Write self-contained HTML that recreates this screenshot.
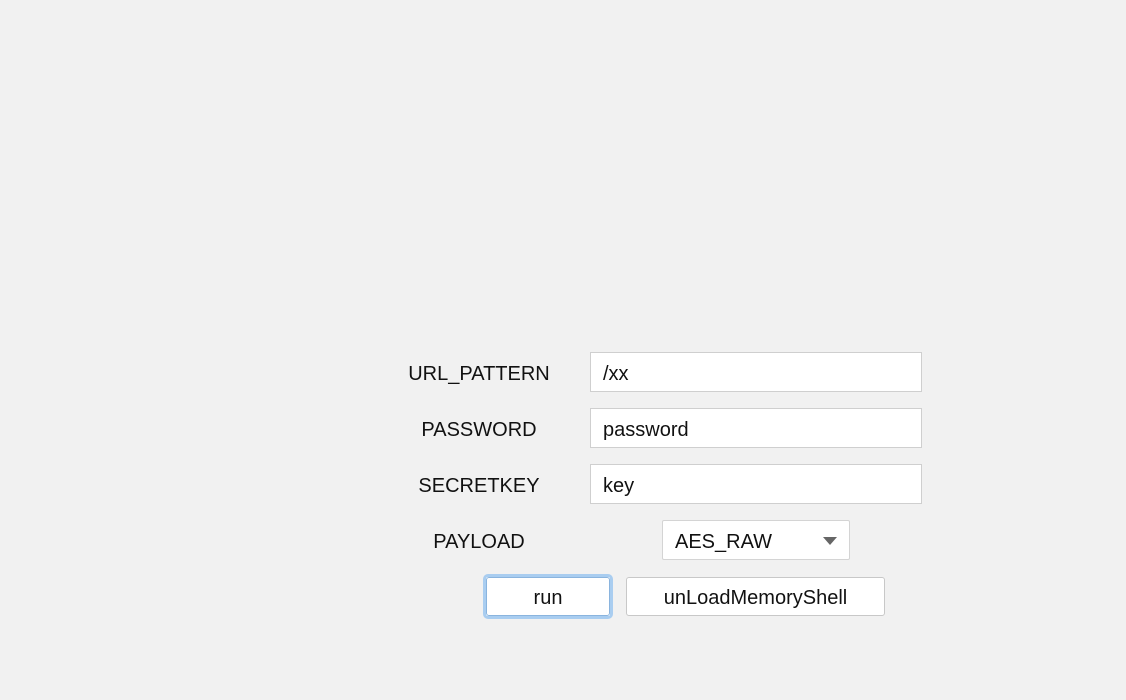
<!DOCTYPE html>
<html><head><style>
html,body{margin:0;padding:0;width:1126px;height:700px;background:#f1f1f1;overflow:hidden;font-family:"Liberation Sans","Noto Sans CJK SC",sans-serif;}
.a{position:absolute;box-sizing:border-box;font-size:20px;color:#111;}
.lbl{text-align:center;line-height:44px;height:40px;}
.in{background:#fff;border:1px solid #cfcfcf;line-height:42px;padding-left:12px;}
.btn{background:#fff;border:1px solid #c8c8c8;border-radius:3px;text-align:center;}
</style></head><body>
<div class="a lbl" style="left:400px;top:352px;width:158px;">URL_PATTERN</div>
<div class="a lbl" style="left:400px;top:408px;width:158px;">PASSWORD</div>
<div class="a lbl" style="left:400px;top:464px;width:158px;">SECRETKEY</div>
<div class="a lbl" style="left:400px;top:520px;width:158px;">PAYLOAD</div>
<div class="a in" style="left:590px;top:352px;width:332px;height:40px;">/xx</div>
<div class="a in" style="left:590px;top:408px;width:332px;height:40px;">password</div>
<div class="a in" style="left:590px;top:464px;width:332px;height:40px;">key</div>
<div class="a in" style="left:662px;top:520px;width:188px;height:40px;border-color:#d4d4d4;border-radius:2px;">AES_RAW
<svg style="position:absolute;left:160px;top:16px" width="14" height="8"><path d="M0 0H14L7 8Z" fill="#666"/></svg></div>
<div class="a btn" style="left:483px;top:574px;width:130px;height:45px;border:3px solid #a9cdf0;border-radius:5px;"></div>
<div class="a btn" style="left:486px;top:577px;width:124px;height:39px;line-height:41px;border-color:#8ab4de;">run</div>
<div class="a btn" style="left:626px;top:577px;width:259px;height:39px;line-height:41px;">unLoadMemoryShell</div>
</body></html>
